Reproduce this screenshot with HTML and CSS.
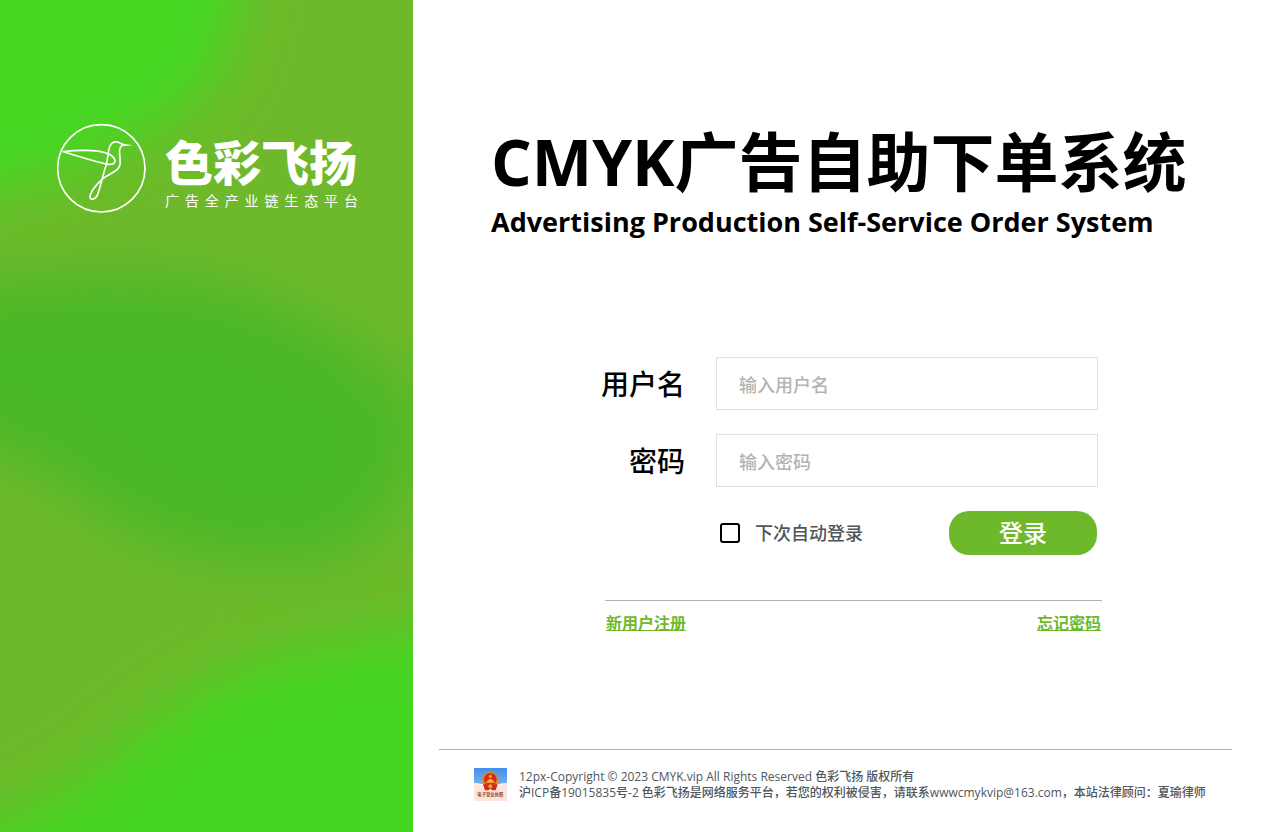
FILE: index.html
```html
<!DOCTYPE html>
<html lang="zh-CN">
<head>
<meta charset="utf-8">
<meta name="viewport" content="width=device-width, initial-scale=1">
<title>CMYK广告自助下单系统</title>
<link rel="stylesheet" href="styles.css">
</head>
<body>
<div class="page">
  <aside class="side">
    <svg class="side-bg" viewBox="0 0 413 832" preserveAspectRatio="none" aria-hidden="true">
      <defs>
        <filter id="soft" x="-50%" y="-50%" width="200%" height="200%"><feGaussianBlur stdDeviation="30"/></filter>
      </defs>
      <rect width="413" height="832" fill="#6eb92b"/>
      <g filter="url(#soft)">
        <path fill="#45d923" d="M-150-150H235C245-20 240 40 210 85C175 128 120 142 80 165C30 190-50 208-150 212Z"/>
        <path fill="#48b826" d="M-150 300C-40 290 60 268 170 276C260 288 340 325 405 385C440 430 410 500 355 550C290 575 180 563 110 520C55 475 15 445-150 415Z"/>
        <path fill="#45d624" d="M560 600C430 632 340 638 250 665C180 697 135 735 95 770C50 803-5 820-65 850V1000H560Z"/>
      </g>
    </svg>
    <div class="brand">
      <svg class="brand-mark" viewBox="0 0 270 270" fill="none" stroke="#fff" stroke-width="5" stroke-linecap="round" stroke-linejoin="round" aria-hidden="true">
        <circle cx="136" cy="136" r="131"/>
        <path d="M22 86C61 81 120 79 150 90C173 97 180 111 176 118C170 128 151 124 138 120C98 110 58 97 22 86Z"/>
        <path d="M203 66C193 67 189 77 191 95C194 121 194 131 182 141C164 154 148 159 138 169C120 185 102 209 102 223C104 233 118 230 125 214C135 188 140 156 150 128C157 105 155 79 164 65C171 55 182 55 187 58C196 62 200 66 208 66"/>
        <path stroke="none" fill="#fff" d="M200 62L232 66.500L200 69Z"/>
      </svg>
      <div class="brand-text">
        <div class="brand-name">色彩飞扬</div>
        <div class="brand-tagline">广告全产业链生态平台</div>
      </div>
    </div>
  </aside>

  <main class="main">
    <header class="heading">
      <h1 class="title">CMYK广告自助下单系统</h1>
      <p class="subtitle">Advertising Production Self-Service Order System</p>
    </header>

    <form class="login">
      <div class="fields">
        <label class="field-label" for="username">用户名</label>
        <input class="field-input" id="username" type="text" placeholder="输入用户名">
        <label class="field-label" for="password">密码</label>
        <input class="field-input" id="password" type="password" placeholder="输入密码">
        <div class="actions">
          <label class="remember"><input class="remember-box" type="checkbox">下次自动登录</label>
          <button class="submit" type="submit">登录</button>
        </div>
      </div>
      <nav class="links">
        <a class="link" href="#register">新用户注册</a>
        <a class="link" href="#forgot">忘记密码</a>
      </nav>
    </form>

    <footer class="footer">
      <svg class="license" viewBox="0 0 99 99" role="img" aria-label="电子营业执照">
        <defs><linearGradient id="sky" x1="0" y1="0" x2="0" y2="1"><stop offset="0" stop-color="#4390ea"/><stop offset="1" stop-color="#70b2f0"/></linearGradient></defs>
        <rect width="99" height="99" fill="#fde5dd"/>
        <path fill="url(#sky)" d="M0 0H99V45Q50 53 0 45Z"/>
        <path fill="#fff" opacity=".6" d="M0 45Q50 53 99 45V49Q50 57 0 49Z"/>
        <circle cx="49" cy="36" r="25" fill="#d8912f"/>
        <path fill="#d32a1c" d="M27 49L33 67H43L49 62L55 67H65L71 49Z"/>
        <circle cx="49" cy="34" r="19" fill="#d7291c"/>
        <path fill="#f3bd39" d="M49 18l2 5h5l-4 3 2 5-5-3-5 3 2-5-4-3h5ZM36 44H62V41H58V37H54V34H44V37H40V41H36Z"/>
        <circle cx="49" cy="55" r="6" fill="#e6a32e"/>
        <text x="49" y="85" text-anchor="middle" class="license-text">电子营业执照</text>
      </svg>
      <p class="legal">12px-Copyright © 2023 CMYK.vip All Rights Reserved 色彩飞扬 版权所有<br>沪ICP备19015835号-2 色彩飞扬是网络服务平台，若您的权利被侵害，请联系wwwcmykvip@163.com，本站法律顾问：夏瑜律师</p>
    </footer>
  </main>
</div>
</body>
</html>
```
FILE: styles.css
```css
* {
  box-sizing: border-box;
}

body {
  margin: 0;
  background: #fff;
  color: #000;
  font-family: "Open Sans", "Noto Sans CJK SC", sans-serif;
  font-weight: 500;
}

.page {
  display: grid;
  grid-template-columns: 413fr 867fr;
  min-height: 100vh;
}

.side {
  position: relative;
  overflow: hidden;
  padding: 123px 54px 0 56px;
}

.side-bg {
  position: absolute;
  inset: 0;
  width: 100%;
  height: 100%;
}

.brand {
  position: relative;
  display: flex;
  gap: 19px;
  color: #fff;
}

.brand-mark {
  flex: none;
  width: 90px;
  height: 90px;
}

.brand-text {
  flex: none;
  width: 193px;
  padding-top: 11px;
}

.brand-name {
  font: 900 48px/52px "Noto Sans CJK SC", sans-serif;
  white-space: nowrap;
}

.brand-tagline {
  padding-top: 4px;
  font: 400 14px/20px "Noto Sans CJK SC", sans-serif;
  text-align: justify;
  text-align-last: justify;
}

.main {
  display: flex;
  flex-direction: column;
  min-width: 0;
}

.heading {
  padding: 116px 0 0 78px;
}

.title {
  margin: 0;
  font-size: 64px;
  font-weight: 700;
  line-height: 92px;
  white-space: nowrap;
}

.subtitle {
  margin: 0;
  font-size: 27px;
  font-weight: 700;
  line-height: 28px;
  white-space: nowrap;
}

.login {
  width: 501px;
  margin: 121px 0 0 188px;
}

.fields {
  display: grid;
  grid-template-columns: 84px 1fr;
  gap: 24px 31px;
  align-items: center;
  padding-right: 4px;
}

.field-label {
  font-size: 28px;
  line-height: 40px;
  text-align: right;
}

.field-input {
  width: 100%;
  height: 53px;
  padding: 2px 22px 0;
  border: 1px solid #e0e0e0;
  background: #fff;
  color: #000;
  font: inherit;
  font-size: 18px;
}

.field-input::placeholder {
  color: #b3b3b3;
}

.actions {
  grid-column: 2;
  display: flex;
  justify-content: space-between;
  align-items: center;
  padding-right: 1px;
}

.remember {
  display: flex;
  align-items: center;
  gap: 15px;
  padding-left: 4px;
  color: #50565b;
  font-size: 18px;
  line-height: 24px;
}

.remember-box {
  appearance: none;
  width: 20px;
  height: 20px;
  margin: 0;
  border: 2px solid #000;
  border-radius: 3px;
  background: #fff;
}

.remember-box:checked {
  background: #6eb92b;
}

.submit {
  width: 148px;
  height: 44px;
  padding: 0;
  border: 0;
  border-radius: 20px;
  background: #6eb92b;
  color: #fff;
  font: inherit;
  font-size: 24px;
  line-height: 44px;
}

.links {
  display: flex;
  justify-content: space-between;
  margin: 45px 0 0 4px;
  padding: 10px 1px 0;
  border-top: 1px solid #b3b3b3;
}

.link {
  color: #6eb92b;
  font-size: 16px;
  font-weight: 700;
  line-height: 24px;
}

.footer {
  display: flex;
  align-items: center;
  gap: 12px;
  margin: auto 48px 0 26px;
  padding: 18px 0 31px 35px;
  border-top: 1px solid #b3b3b3;
}

.license {
  flex: none;
  width: 33px;
  height: 33px;
}

.license-text {
  fill: #96492f;
  font-size: 13px;
  font-weight: 700;
}

.legal {
  margin: 0;
  padding-top: 1px;
  color: #50565b;
  font-size: 12px;
  line-height: 16px;
  white-space: nowrap;
}
```
